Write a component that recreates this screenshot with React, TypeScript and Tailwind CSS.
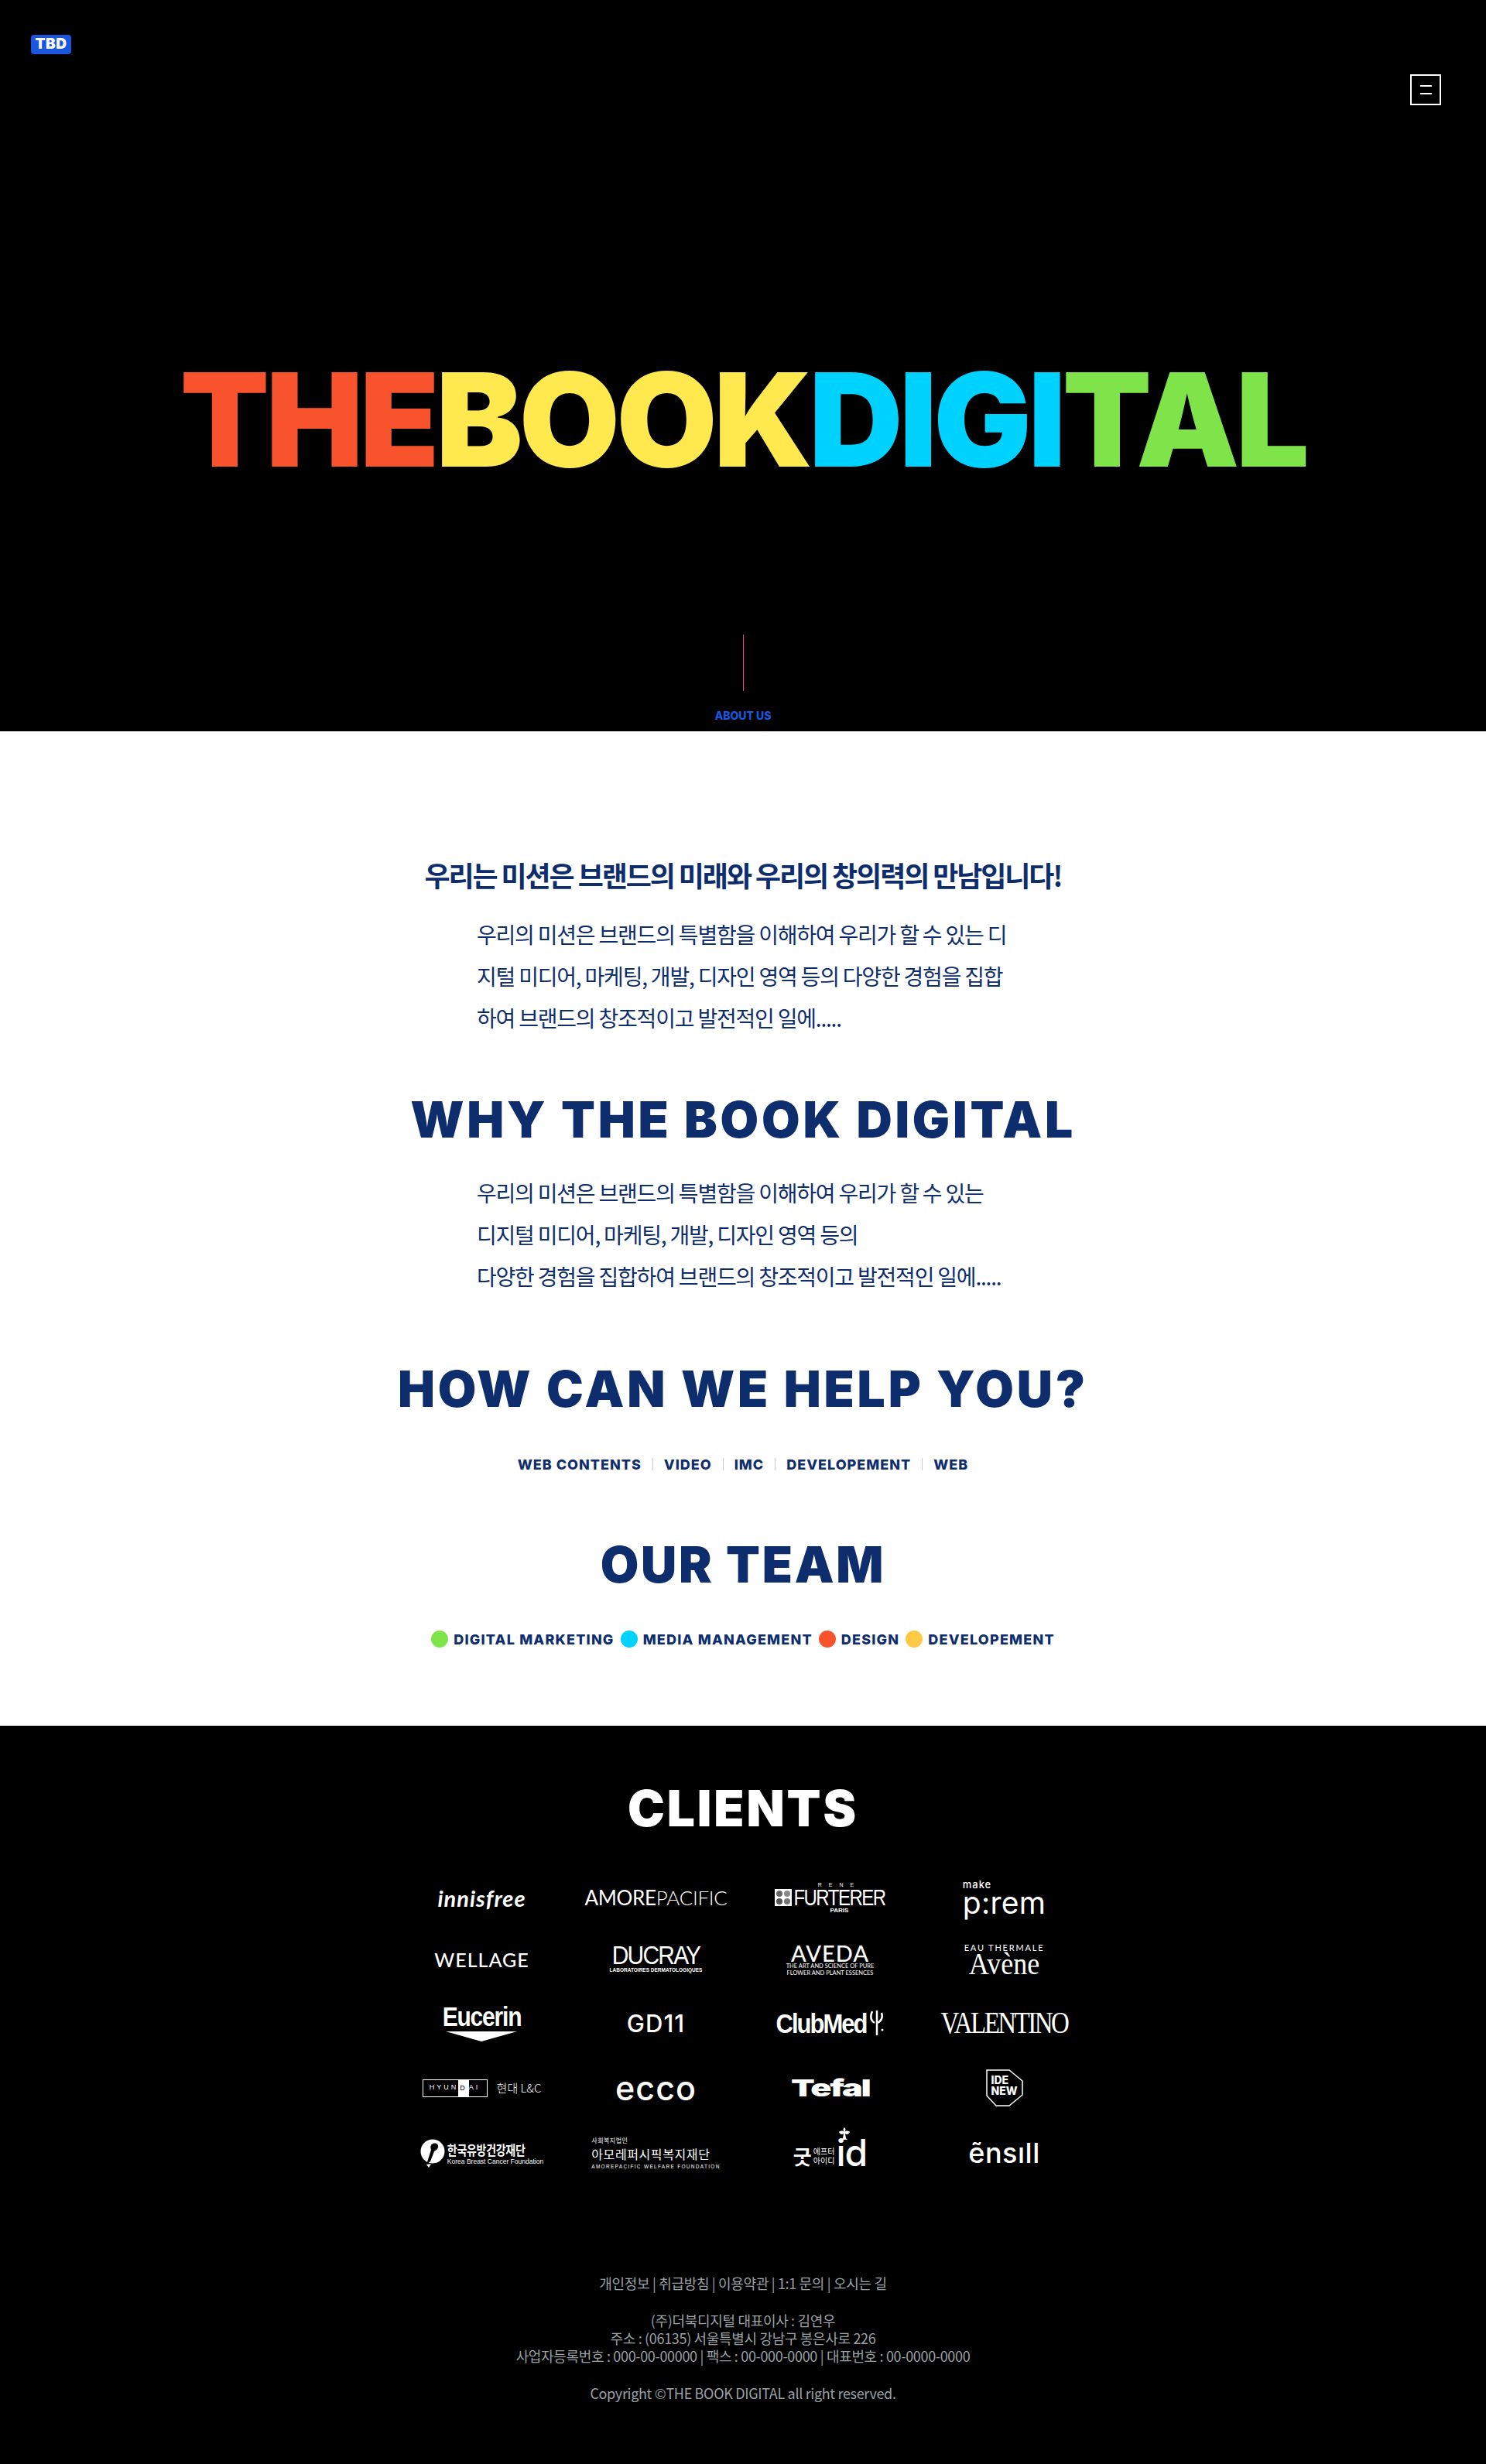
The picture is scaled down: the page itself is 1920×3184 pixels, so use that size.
const kr = "font-['Noto_Sans_CJK_KR',sans-serif]";

function Dot({ className }: { className: string }) {
  return <span className={`inline-block h-[22px] w-[22px] rounded-full ${className}`} />;
}

function Sep() {
  return <span className="mx-[14px] inline-block h-[16px] w-px bg-[#c5ccd9]" />;
}

function Cell({ children }: { children: React.ReactNode }) {
  return <div className="flex items-center justify-center">{children}</div>;
}

function Logos() {
  return (
    <div className="mx-auto mt-[35px] grid w-[900px] grid-cols-4 grid-rows-[80px_80px_84px_84px_84px] text-white">
      <Cell>
        <span className="font-['Lato',sans-serif] text-[29px] leading-none font-bold italic tracking-[1px]">innisfree</span>
      </Cell>
      <Cell>
        <span className="font-['Lato',sans-serif] text-[26px] leading-none font-normal tracking-[-0.3px]">
          AMORE<span className="font-light">PACIFIC</span>
        </span>
      </Cell>
      <Cell>
        <div className="flex items-center gap-[2px] font-['Liberation_Sans',sans-serif]">
          <svg width="22" height="22" viewBox="0 0 22 22">
            <rect width="22" height="22" fill="#fff" />
            <circle cx="6" cy="6" r="4" fill="#666" />
            <circle cx="16" cy="6" r="4" fill="#888" />
            <circle cx="6" cy="16" r="4" fill="#555" />
            <circle cx="16" cy="16" r="4" fill="#777" />
          </svg>
          <div className="flex flex-col items-center">
            <span className="text-[7px] leading-[9px] tracking-[9px]">RENE</span>
            <span className="text-[24px] leading-[24px] tracking-[-1.5px] scale-y-125">FURTERER</span>
            <span className="text-[8px] leading-[10px] font-bold">PARIS</span>
          </div>
        </div>
      </Cell>
      <Cell>
        <div className="text-left font-['Inter',sans-serif] leading-none">
          <div className="text-[13px] font-medium tracking-[1px]">make</div>
          <div className="text-[39px] leading-[34px] font-normal tracking-[0.3px]">p:rem</div>
        </div>
      </Cell>

      <Cell>
        <span className="font-['Lato',sans-serif] text-[25px] leading-none font-medium tracking-[1px]">WELLAGE</span>
      </Cell>
      <Cell>
        <div className="flex flex-col items-center font-['Liberation_Sans',sans-serif]">
          <span className="text-[30px] leading-[28px] tracking-[-1.8px] scale-y-110">DUCRAY</span>
          <span className="text-[6.5px] leading-[10px] font-bold whitespace-nowrap">LABORATOIRES DERMATOLOGIQUES</span>
        </div>
      </Cell>
      <Cell>
        <div className="flex flex-col items-center font-['Lato',sans-serif]">
          <span className="text-[29px] leading-[25px] font-medium tracking-[1px]">AVEDA</span>
          <span className="text-[7.5px] leading-[9px] whitespace-nowrap">THE ART AND SCIENCE OF PURE</span>
          <span className="text-[7.5px] leading-[9px] whitespace-nowrap">FLOWER AND PLANT ESSENCES</span>
        </div>
      </Cell>
      <Cell>
        <div className="flex flex-col items-center">
          <span className="font-['Lato',sans-serif] text-[11px] leading-[12px] tracking-[1.8px]">EAU THERMALE</span>
          <span className="font-['Liberation_Serif',serif] text-[36px] leading-[30px] scale-y-110">Avène</span>
        </div>
      </Cell>

      <Cell>
        <div className="flex flex-col items-center">
          <span className="font-['Liberation_Sans',sans-serif] text-[30px] leading-[32px] font-bold tracking-[-1.2px] scale-y-115">Eucerin</span>
          <svg width="92" height="13" viewBox="0 0 92 13" className="mt-[3px]">
            <path d="M0 0h92L46 13z" fill="#fff" />
          </svg>
        </div>
      </Cell>
      <Cell>
        <span className="font-['Inter',sans-serif] text-[31px] leading-none font-medium tracking-[1px]">GD11</span>
      </Cell>
      <Cell>
        <div className="flex items-center">
          <span className="font-['Liberation_Sans',sans-serif] text-[31px] leading-none font-bold tracking-[-2px] scale-y-115">ClubMed</span>
          <svg width="20" height="34" viewBox="0 0 20 34" fill="none" stroke="#fff" strokeWidth="2.5" className="ml-[3px]">
            <path d="M5 2c-3 7-2 12 3 15M11 33V1M17 4c2 6 0 10-5 13" />
            <circle cx="18" cy="26" r="1.5" fill="#fff" stroke="none" />
          </svg>
        </div>
      </Cell>
      <Cell>
        <span className="font-['Liberation_Serif',serif] text-[33px] leading-none tracking-[-2.5px] scale-y-120">VALENTINO</span>
      </Cell>

      <Cell>
        <div className="flex items-center gap-[12px]">
          <div className="flex h-[23px] w-[84px] items-center justify-center border border-white font-['Liberation_Sans',sans-serif] text-[9px] tracking-[3px]">
            HYUN<span className="bg-white px-[2px] leading-[21px] text-black">D</span>AI
          </div>
          <span className={`${kr} text-[15px] font-light whitespace-nowrap`}>현대 L&amp;C</span>
        </div>
      </Cell>
      <Cell>
        <span className="font-['Inter',sans-serif] text-[43px] leading-none font-medium tracking-[1px]">ecco</span>
      </Cell>
      <Cell>
        <span className="inline-block scale-x-[1.5] font-['Inter',sans-serif] text-[30px] leading-none font-black tracking-[-1.5px]">Tefal</span>
      </Cell>
      <Cell>
        <div className="relative h-[48px] w-[48px]">
          <svg width="48" height="48" viewBox="0 0 48 48" fill="none" stroke="#fff" strokeWidth="1.5" className="absolute inset-0">
            <path d="M1 1h29l17 14v18L30 47H13L1 34z" />
          </svg>
          <div className="absolute top-[7px] left-[7px] text-left font-['Inter',sans-serif] text-[14px] leading-[14px] font-extrabold">
            IDE
            <br />
            NEW
          </div>
        </div>
      </Cell>

      <Cell>
        <div className="flex items-center gap-[3px]">
          <svg width="32" height="37" viewBox="0 0 32 37">
            <circle cx="16" cy="16" r="15.5" fill="#fff" />
            <path d="M21 6c-6-2-9 3-7 8L8 33l5-4 5-13c5-2 7-7 3-10z" fill="#000" />
            <path d="M8 33l3 4 3-5z" fill="#fff" />
          </svg>
          <div className={`flex flex-col text-left ${kr}`}>
            <span className="scale-y-125 text-[14px] leading-[22px] font-bold tracking-[-0.3px] whitespace-nowrap">한국유방건강재단</span>
            <span className="font-['Liberation_Sans',sans-serif] text-[8.5px] leading-[11px] whitespace-nowrap">Korea Breast Cancer Foundation</span>
          </div>
        </div>
      </Cell>
      <Cell>
        <div className={`flex flex-col text-left ${kr}`}>
          <span className="text-[8px] leading-[10px] tracking-[0.5px] whitespace-nowrap">사회복지법인</span>
          <span className="text-[16px] leading-[24px] tracking-[0.6px] whitespace-nowrap">아모레퍼시픽복지재단</span>
          <span className="font-['Liberation_Sans',sans-serif] text-[6.5px] leading-[9px] tracking-[1.3px] whitespace-nowrap">AMOREPACIFIC WELFARE FOUNDATION</span>
        </div>
      </Cell>
      <Cell>
        <div className={`relative flex items-end ${kr}`}>
          <span className="text-[26px] leading-[30px] font-bold">굿</span>
          <span className="mx-[2px] mb-[3px] text-[10px] leading-[12px]">
            에프터
            <br />
            아이디
          </span>
          <span className="font-['Inter',sans-serif] text-[48px] leading-[38px] font-medium tracking-[-1px]">id</span>
          <svg width="14" height="18" viewBox="0 0 14 18" fill="#fff" className="absolute -top-[14px] right-[22px]">
            <path d="M7 0c2 2 2 4 0 6 2-2 5-2 7 0-1 3-4 4-6 2l1 6 2 2H3l2-2 1-6c-2 2-5 1-6-2 2-2 5-2 7 0-2-2-2-4 0-6z" />
          </svg>
        </div>
      </Cell>
      <Cell>
        <span className="font-['Inter',sans-serif] text-[36px] leading-none font-medium tracking-[0.5px]">ẽnsıll</span>
      </Cell>
    </div>
  );
}

export default function App() {
  return (
    <div className="w-full font-['Inter',sans-serif]">
      <section className="flex h-[945px] flex-col bg-black">
        <header className="flex items-start justify-between pt-[45px] pr-[58px] pl-[40px]">
          <div className="flex h-[25px] w-[52px] items-center justify-center rounded-[4px] bg-[#1a56e0] text-[19px] font-black tracking-[0.5px] text-white">
            TBD
          </div>
          <button className="mt-[51px] flex h-[40px] w-[40px] flex-col items-center justify-center gap-[8px] border-2 border-white">
            <span className="h-[2px] w-[15px] bg-white" />
            <span className="h-[2px] w-[15px] bg-white" />
          </button>
        </header>
        <h1 className="mt-[341px] text-center text-[168px] leading-[130px] font-black tracking-[-4.6px] whitespace-nowrap">
          <span className="text-[#f9532d]">THE</span>
          <span className="text-[#ffe94f]">BOOK</span>
          <span className="text-[#00d2ff]">DIGI</span>
          <span className="text-[#7ee44a]">TAL</span>
        </h1>
        <div className="mt-auto flex flex-col items-center">
          <span className="h-[73px] w-px bg-[#ff3d8a]" />
          <span className="mt-[22px] mb-[10px] text-[14px] leading-[20px] font-extrabold text-[#1a56e0]">ABOUT US</span>
        </div>
      </section>

      <section className="bg-white pt-[160px] pb-[97px] text-center text-[#0d2d6c]">
        <h2 className={`${kr} text-[36px] leading-[50px] font-bold tracking-[-2.1px]`}>
          우리는 미션은 브랜드의 미래와 우리의 창의력의 만남입니다!
        </h2>
        <p className={`${kr} mx-auto mt-[25px] w-[688px] text-left text-[28px] leading-[54px] font-normal tracking-[-1.2px] whitespace-nowrap`}>
          우리의 미션은 브랜드의 특별함을 이해하여 우리가 할 수 있는 디
          <br />
          지털 미디어, 마케팅, 개발, 디자인 영역 등의 다양한 경험을 집합
          <br />
          하여 브랜드의 창조적이고 발전적인 일에.....
        </p>
        <h2 className="mt-[65px] text-[64px] leading-[80px] font-black tracking-[3.8px]">WHY THE BOOK DIGITAL</h2>
        <p className={`${kr} mx-auto mt-[27px] w-[688px] text-left text-[28px] leading-[54px] font-normal tracking-[-1.2px] whitespace-nowrap`}>
          우리의 미션은 브랜드의 특별함을 이해하여 우리가 할 수 있는
          <br />
          디지털 미디어, 마케팅, 개발, 디자인 영역 등의
          <br />
          다양한 경험을 집합하여 브랜드의 창조적이고 발전적인 일에.....
        </p>
        <h2 className="mt-[79px] text-[64px] leading-[80px] font-black tracking-[3.85px]">HOW CAN WE HELP YOU?</h2>
        <div className="mt-[42px] flex h-[30px] items-center justify-center text-[18px] font-extrabold tracking-[1px]">
          WEB CONTENTS
          <Sep />
          VIDEO
          <Sep />
          IMC
          <Sep />
          DEVELOPEMENT
          <Sep />
          WEB
        </div>
        <h2 className="mt-[75px] text-[64px] leading-[80px] font-black tracking-[2.75px]">OUR TEAM</h2>
        <div className="mt-[41px] flex h-[30px] items-center justify-center gap-[6px] text-[18px] font-extrabold tracking-[1.2px]">
          <Dot className="bg-[#7ee44a]" />
          <span className="ml-[1px] mr-[2px]">DIGITAL MARKETING</span>
          <Dot className="bg-[#00d2ff]" />
          <span className="ml-[1px] mr-[2px]">MEDIA MANAGEMENT</span>
          <Dot className="bg-[#f9532d]" />
          <span className="ml-[1px] mr-[2px]">DESIGN</span>
          <Dot className="bg-[#ffc845]" />
          <span className="ml-[1px]">DEVELOPEMENT</span>
        </div>
      </section>

      <footer className="h-[954px] bg-black pt-[67px] text-center">
        <h2 className="text-[64px] leading-[80px] font-black tracking-[2.9px] text-white">CLIENTS</h2>
        <Logos />
        <div className={`${kr} mt-[115px] text-[18px] leading-[23px] tracking-[-0.33px] text-[#9aa0a6]`}>
          <p>개인정보 | 취급방침 | 이용약관 | 1:1 문의 | 오시는 길</p>
          <p className="mt-[25px]">(주)더북디지털 대표이사 : 김연우</p>
          <p>주소 : (06135) 서울특별시 강남구 봉은사로 226</p>
          <p>사업자등록번호 : 000-00-00000 | 팩스 : 00-000-0000 | 대표번호 : 00-0000-0000</p>
          <p className="mt-[25px]">Copyright ©THE BOOK DIGITAL all right reserved.</p>
        </div>
      </footer>
    </div>
  );
}
